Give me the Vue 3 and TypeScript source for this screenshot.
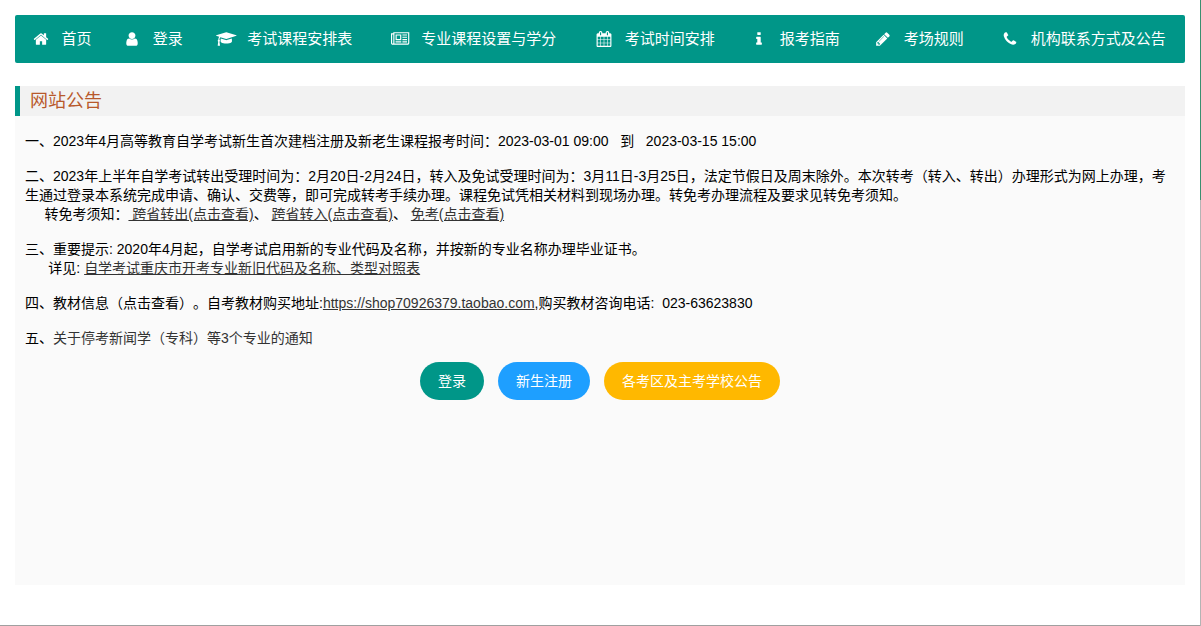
<script setup lang="ts">
interface NavItem {
  label: string
  width: number
  path: string
}

interface Action {
  label: string
  tone: 'primary' | 'info' | 'warm'
}

const navItems: NavItem[] = [
  {
    label: '首页',
    width: 1792,
    path: 'M1472 992v480q0 26-19 45t-45 19h-384v-384h-256v384h-384q-26 0-45-19t-19-45v-480q0-1 .5-3t.5-3l575-474 575 474q1 2 1 6zm223-69l-62 74q-8 9-21 11h-3q-13 0-21-7l-692-577-692 577q-12 8-24 7-13-2-21-11l-62-74q-8-10-7-23.5t11-21.5l719-599q32-26 76-26t76 26l244 204v-195q0-14 9-23t23-9h192q14 0 23 9t9 23v408l219 182q10 8 11 21.5t-7 23.5z',
  },
  {
    label: '登录',
    width: 1792,
    path: 'M1536 1399q0 109-62.5 187t-150.5 78h-854q-88 0-150.5-78t-62.5-187q0-85 8.5-160.5t31.5-152 58.5-131 94-89 134.5-34.5q131 128 313 128t313-128q76 0 134.5 34.5t94 89 58.5 131 31.5 152 8.5 160.5zm-256-887q0 159-112.5 271.5t-271.5 112.5-271.5-112.5-112.5-271.5 112.5-271.5 271.5-112.5 271.5 112.5 112.5 271.5z',
  },
  {
    label: '考试课程安排表',
    width: 2304,
    path: 'M1774 836l18 316q4 69-82 128t-235 93.5-323 34.5-323-34.5-235-93.5-82-128l18-316 574 181q22 7 48 7t48-7zm530-324q0 23-22 31l-1120 352q-4 1-10 1t-10-1l-652-206q-43 34-71 111.5t-34 178.5q63 36 63 109 0 69-58 107l58 433q2 14-8 25-9 11-24 11h-192q-15 0-24-11-10-11-8-25l58-433q-58-38-58-107 0-73 65-111 11-207 98-330l-333-104q-22-8-22-31t22-31l1120-352q4-1 10-1t10 1l1120 352q22 8 22 31z',
  },
  {
    label: '专业课程设置与学分',
    width: 2048,
    path: 'M1024 512h-384v384h384v-384zm128 640v128h-640v-128h640zm0-768v640h-640v-640h640zm640 768v128h-512v-128h512zm0-256v128h-512v-128h512zm0-256v128h-512v-128h512zm0-256v128h-512v-128h512zm-1536 960v-960h-128v960q0 26 19 45t45 19 45-19 19-45zm1664 0v-1088h-1536v1088q0 33-11 64h1483q26 0 45-19t19-45zm128-1216v1216q0 80-56 136t-136 56h-1664q-80 0-136-56t-56-136v-1088h256v-128h1792z',
  },
  {
    label: '考试时间安排',
    width: 1792,
    path: 'M192 1664h288v-288h-288v288zm352 0h320v-288h-320v288zm-352-352h288v-320h-288v320zm352 0h320v-320h-320v320zm-352-384h288v-288h-288v288zm736 736h320v-288h-320v288zm-384-736h320v-288h-320v288zm768 736h288v-288h-288v288zm-384-352h320v-320h-320v320zm-352-864v-288q0-13-9.5-22.5t-22.5-9.5h-64q-13 0-22.5 9.5t-9.5 22.5v288q0 13 9.5 22.5t22.5 9.5h64q13 0 22.5-9.5t9.5-22.5zm736 864h288v-320h-288v320zm-384-384h320v-288h-320v288zm384 0h288v-288h-288v288zm32-480v-288q0-13-9.5-22.5t-22.5-9.5h-64q-13 0-22.5 9.5t-9.5 22.5v288q0 13 9.5 22.5t22.5 9.5h64q13 0 22.5-9.5t9.5-22.5zm384-64v1280q0 52-38 90t-90 38h-1408q-52 0-90-38t-38-90v-1280q0-52 38-90t90-38h128v-96q0-66 47-113t113-47h64q66 0 113 47t47 113v96h384v-96q0-66 47-113t113-47h64q66 0 113 47t47 113v96h128q52 0 90 38t38 90z',
  },
  {
    label: '报考指南',
    width: 1792,
    path: 'M1216 1344v128q0 26-19 45t-45 19h-512q-26 0-45-19t-19-45v-128q0-26 19-45t45-19h64v-384h-64q-26 0-45-19t-19-45v-128q0-26 19-45t45-19h384q26 0 45 19t19 45v576h64q26 0 45 19t19 45zm-128-1152v192q0 26-19 45t-45 19h-256q-26 0-45-19t-19-45v-192q0-26 19-45t45-19h256q26 0 45 19t19 45z',
  },
  {
    label: '考场规则',
    width: 1792,
    path: 'M491 1536l91-91-235-235-91 91v107h128v128h107zm523-928q0-22-22-22-10 0-17 7l-542 542q-7 7-7 17 0 22 22 22 10 0 17-7l542-542q7-7 7-17zm-54-192l416 416-832 832h-416v-416zm683 96q0 53-37 90l-166 166-416-416 166-165q36-38 90-38 53 0 91 38l235 234q37 39 37 91z',
  },
  {
    label: '机构联系方式及公告',
    width: 1792,
    path: 'M1600 1240q0 27-10 70.5t-21 68.5q-21 50-122 106-94 51-186 51-27 0-53-3.5t-57.5-12.5-47-14.5-55.5-20.5-49-18q-98-35-175-83-127-79-264-216t-216-264q-48-77-83-175-3-9-18-49t-20.5-55.5-14.5-47-12.5-57.5-3.5-53q0-92 51-186 56-101 106-122 25-11 68.5-21t70.5-10q14 0 21 3 18 6 53 76 11 19 30 54t35 63.5 31 53.5q3 4 17.5 25t21.5 35.5 7 28.5q0 20-28.5 50t-62 55-62 53-28.5 46q0 9 5 22.5t8.5 20.5 14 24 11.5 19q76 137 174 235t235 174q2 1 19 11.5t24 14 20.5 8.5 22.5 5q18 0 46-28.5t53-62 55-62 50-28.5q14 0 28.5 7t35.5 21.5 25 17.5q25 15 53.5 31t63.5 35 54 30q70 33 76 51 3 7 3 21z',
  },
]

const actions: Action[] = [
  { label: '登录', tone: 'primary' },
  { label: '新生注册', tone: 'info' },
  { label: '各考区及主考学校公告', tone: 'warm' },
]
</script>

<template>
  <div class="page">
    <nav class="nav">
      <ul class="nav-list">
        <li v-for="item in navItems" :key="item.label" class="nav-item">
          <a href="#" class="nav-link">
            <span class="nav-icon">
              <svg :viewBox="`0 0 ${item.width} 1792`" aria-hidden="true"><path :d="item.path" /></svg>
            </span>
            <span>{{ item.label }}</span>
          </a>
        </li>
      </ul>
    </nav>

    <main class="panel">
      <h1 class="title">网站公告</h1>
      <div class="notices">
        <p>一、2023年4月高等教育自学考试新生首次建档注册及新老生课程报考时间：2023-03-01 09:00&nbsp;&nbsp; 到&nbsp;&nbsp; 2023-03-15 15:00</p>
        <p>
          二、2023年上半年自学考试转出受理时间为：2月20日-2月24日，转入及免试受理时间为：3月11日-3月25日，法定节假日及周末除外。本次转考（转入、转出）办理形式为网上办理，考生通过登录本系统完成申请、确认、交费等，即可完成转考手续办理。课程免试凭相关材料到现场办理。转免考办理流程及要求见转免考须知。<br>
          &nbsp;&nbsp;&nbsp;&nbsp;&nbsp;转免考须知：<a href="#">&nbsp;跨省转出(点击查看)</a>、&nbsp;<a href="#">跨省转入(点击查看)</a>、&nbsp;<a href="#">免考(点击查看)</a>
        </p>
        <p>
          三、重要提示: 2020年4月起，自学考试启用新的专业代码及名称，并按新的专业名称办理毕业证书。<br>
          &nbsp;&nbsp;&nbsp;&nbsp;&nbsp;&nbsp;详见: <a href="#">自学考试重庆市开考专业新旧代码及名称、类型对照表</a>
        </p>
        <p>四、教材信息（点击查看）。自考教材购买地址:<a href="#">https://shop70926379.taobao.com</a>,购买教材咨询电话:&nbsp; 023-63623830</p>
        <p>五、<a href="#" class="plain">关于停考新闻学（专科）等3个专业的通知</a></p>
      </div>
      <div class="actions">
        <button v-for="action in actions" :key="action.label" type="button" class="action" :class="action.tone">
          {{ action.label }}
        </button>
      </div>
    </main>
    <div class="scroll-track" aria-hidden="true"></div>
  </div>
</template>

<style>
body {
  background: #fff;
}
</style>

<style scoped>
.page {
  box-sizing: border-box;
  min-height: 100vh;
  display: flex;
  flex-direction: column;
  gap: 23px;
  padding: 15px 16px 40px 15px;
  border-bottom: 1px solid #a0a0a0;
  font-family: "Liberation Sans", "Noto Sans CJK SC", sans-serif;
  font-size: 14px;
  line-height: 19px;
  color: #000;
  text-spacing-trim: space-all;
}

.nav {
  background: #009688;
  border-radius: 2px;
}

.nav-list {
  display: table;
  width: 100%;
  margin: 0;
  padding: 0;
  list-style: none;
}

.nav-item {
  display: table-cell;
  padding: 0 11px;
  text-align: center;
}

.nav-link {
  display: inline-flex;
  align-items: center;
  gap: 10px;
  height: 48px;
  vertical-align: top;
  color: #fff;
  font-size: 15px;
  line-height: 48px;
  text-decoration: none;
  white-space: nowrap;
}

.nav-icon {
  display: flex;
  justify-content: center;
  width: 22px;
}

.nav-icon svg {
  height: 16px;
  fill: currentColor;
}

.panel {
  flex: 1;
  background: #fafafa;
}

.title {
  margin: 0;
  padding-left: 10px;
  border-left: 5px solid #009688;
  background: #f2f2f2;
  color: #b8592b;
  font-size: 18px;
  font-weight: 400;
  line-height: 30px;
}

.notices {
  display: flex;
  flex-direction: column;
  gap: 16px;
  padding: 16px 10px 14px;
}

.notices p {
  margin: 0;
}

.notices a {
  color: #333;
  text-decoration: underline;
}

.notices a.plain {
  text-decoration: none;
}

.actions {
  display: flex;
  flex-wrap: wrap;
  justify-content: center;
  gap: 14px;
}

.action {
  height: 38px;
  padding: 0 18px;
  border: 0;
  border-radius: 19px;
  color: #fff;
  font: inherit;
  line-height: 38px;
  white-space: nowrap;
  cursor: pointer;
}

.primary {
  background: #009688;
}

.info {
  background: #1e9fff;
}

.warm {
  background: #ffb800;
}

.scroll-track {
  position: absolute;
  top: 0;
  right: 0;
  bottom: 0;
  width: 1px;
  background: linear-gradient(#3a8f70 200px, #b4b4b4 200px);
}
</style>
